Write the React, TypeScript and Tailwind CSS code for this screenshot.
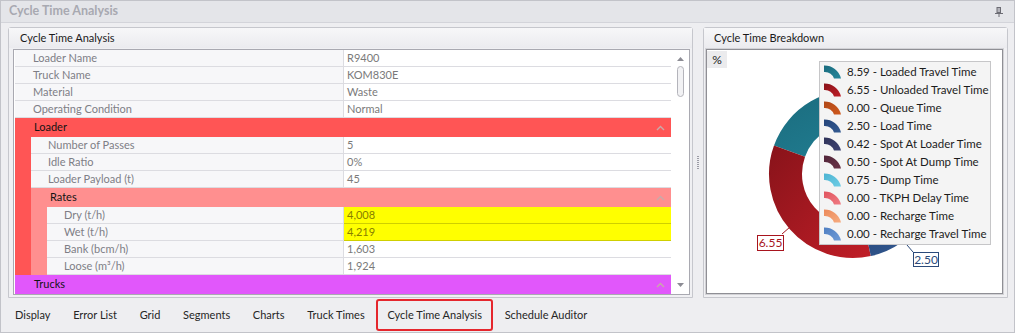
import React from 'react';

type GridRow = {
  label: string;
  value?: string;
  strips: string[];
  cat?: string;
  yellow?: boolean;
};

const RED = 'bg-[#ff5555]';
const SALMON = 'bg-[#ff8f8f]';

const rows: GridRow[] = [
  { label: 'Loader Name', value: 'R9400', strips: [] },
  { label: 'Truck Name', value: 'KOM830E', strips: [] },
  { label: 'Material', value: 'Waste', strips: [] },
  { label: 'Operating Condition', value: 'Normal', strips: [] },
  { label: 'Loader', strips: [], cat: RED },
  { label: 'Number of Passes', value: '5', strips: [RED] },
  { label: 'Idle Ratio', value: '0%', strips: [RED] },
  { label: 'Loader Payload (t)', value: '45', strips: [RED] },
  { label: 'Rates', strips: [RED], cat: SALMON },
  { label: 'Dry (t/h)', value: '4,008', strips: [RED, SALMON], yellow: true },
  { label: 'Wet (t/h)', value: '4,219', strips: [RED, SALMON], yellow: true },
  { label: 'Bank (bcm/h)', value: '1,603', strips: [RED, SALMON] },
  { label: 'Loose (m³/h)', value: '1,924', strips: [RED, SALMON] },
  { label: 'Trucks', strips: [], cat: 'bg-[#e157fb]' },
];

const segments = [
  { value: 8.59, label: 'Loaded Travel Time', from: '#1a6b7d', to: '#25879c' },
  { value: 6.55, label: 'Unloaded Travel Time', from: '#88131a', to: '#c01e27' },
  { value: 0, label: 'Queue Time', from: '#b04818', to: '#d05a1e' },
  { value: 2.5, label: 'Load Time', from: '#25457a', to: '#345b92' },
  { value: 0.42, label: 'Spot At Loader Time', from: '#2f3359', to: '#3e4372' },
  { value: 0.5, label: 'Spot At Dump Time', from: '#52263a', to: '#693246' },
  { value: 0.75, label: 'Dump Time', from: '#4db4d2', to: '#6fcde5' },
  { value: 0, label: 'TKPH Delay Time', from: '#e0545e', to: '#f07c84' },
  { value: 0, label: 'Recharge Time', from: '#ec8a5a', to: '#f6ac80' },
  { value: 0, label: 'Recharge Travel Time', from: '#4f7fc2', to: '#6f9bd6' },
];

const tabs = ['Display', 'Error List', 'Grid', 'Segments', 'Charts', 'Truck Times', 'Cycle Time Analysis', 'Schedule Auditor'];

function arcPath(cx: number, cy: number, R: number, r: number, a0: number, a1: number) {
  const pt = (rad: number, a: number) => [cx + rad * Math.cos((a * Math.PI) / 180), cy - rad * Math.sin((a * Math.PI) / 180)];
  const [x0, y0] = pt(R, a0);
  const [x1, y1] = pt(R, a1);
  const [x2, y2] = pt(r, a1);
  const [x3, y3] = pt(r, a0);
  const large = a1 - a0 > 180 ? 1 : 0;
  return `M${x0} ${y0} A${R} ${R} 0 ${large} 0 ${x1} ${y1} L${x2} ${y2} A${r} ${r} 0 ${large} 1 ${x3} ${y3} Z`;
}

function Chevron() {
  return (
    <svg width="9" height="6" viewBox="0 0 9 6">
      <path d="M1 5 L4.5 1.5 L8 5" fill="none" stroke="#c9a9a9" strokeWidth="1.4" />
    </svg>
  );
}

function GridLine({ row }: { row: GridRow }) {
  if (row.cat) {
    return (
      <div className="flex h-[19px]">
        {row.strips.map((s, i) => (
          <div key={i} className={`w-4 shrink-0 ${s}`} />
        ))}
        <div className={`flex flex-1 items-center justify-between pl-[19px] pr-[6px] text-[#141414] ${row.cat}`}>
          <span>{row.label}</span>
          <Chevron />
        </div>
      </div>
    );
  }
  return (
    <div className="flex h-[17px]">
      <div className="flex w-[329px] shrink-0">
        {row.strips.map((s, i) => (
          <div key={i} className={`w-4 shrink-0 ${s}`} />
        ))}
        <div
          className={`flex-1 border-r border-b border-[#dcdce1] bg-[#f7f7f9] leading-[16px] text-[#7e7e86] ${
            row.strips.length === 0 ? 'pl-[18px]' : 'pl-[17px]'
          }`}
        >
          {row.label}
        </div>
      </div>
      <div
        className={`flex-1 border-b pl-[3px] leading-[16px] ${
          row.yellow ? 'border-[#cfcf00] bg-[#ffff00] text-[#878000]' : 'border-[#dcdce1] bg-white text-[#7a7a7a]'
        }`}
      >
        {row.value}
      </div>
    </div>
  );
}

function LegendMarker({ from, to, id }: { from: string; to: string; id: string }) {
  return (
    <svg width="20" height="14" viewBox="0 0 20 14" className="shrink-0">
      <defs>
        <linearGradient id={id} x1="0" y1="0" x2="1" y2="1">
          <stop offset="0" stopColor={from} />
          <stop offset="1" stopColor={to} />
        </linearGradient>
      </defs>
      <path d="M2 0.5 A17 17 0 0 1 19 13.5 L12 13.5 A10 10 0 0 0 2 7 Z" fill={`url(#${id})`} />
    </svg>
  );
}

function Donut() {
  const total = segments.reduce((s, x) => s + x.value, 0);
  let angle = 0;
  const cx = 146;
  const cy = 124;
  return (
    <svg width="295" height="243" className="block">
      <defs>
        {segments.map((s, i) => (
          <linearGradient key={i} id={`seg${i}`} x1="0" y1="0" x2="1" y2="1">
            <stop offset="0" stopColor={s.from} />
            <stop offset="1" stopColor={s.to} />
          </linearGradient>
        ))}
      </defs>
      {segments.map((s, i) => {
        const a0 = angle;
        const a1 = angle + (s.value / total) * 360;
        angle = a1;
        if (s.value === 0) return null;
        return <path key={i} d={arcPath(cx, cy, 84, 51, a0, a1)} fill={`url(#seg${i})`} />;
      })}
      <line x1="75" y1="184" x2="83" y2="177" stroke="#a8141e" strokeWidth="1" />
      <line x1="200" y1="195" x2="206" y2="202" stroke="#2b4a7a" strokeWidth="1" />
    </svg>
  );
}

function PinIcon() {
  return (
    <svg width="8" height="10" viewBox="0 0 8 10">
      <rect x="2" y="0.5" width="3.5" height="5" fill="#b4b4bb" stroke="#6c6c74" strokeWidth="1" />
      <path d="M0 6.5 H8" stroke="#6c6c74" strokeWidth="1" />
      <path d="M4 7 V10" stroke="#6c6c74" strokeWidth="1" />
    </svg>
  );
}

export default function App() {
  return (
    <div className="flex h-[333px] w-[1015px] flex-col overflow-hidden border border-[#c2c3c9] bg-[#eeeef1] font-['Lato',sans-serif] text-[11px]">
      {/* Title bar */}
      <div className="flex h-[22px] shrink-0 items-center justify-between border-b border-[#d3d4da] bg-[#e4e5e9] pr-[11px] pl-[8px]">
        <span className="text-[12.5px] font-bold text-[#a8a9b1]">Cycle Time Analysis</span>
        <PinIcon />
      </div>

      {/* Panels */}
      <div className="flex h-[275px] shrink-0 pt-[4px] pl-[7px]">
        <div className="flex h-[271px] w-[685px] flex-col rounded-t-[3px] border border-[#c6c7cd] bg-[#f0f0f3]">
          <div className="flex h-[20px] items-center bg-linear-to-b from-[#f7f7f9] to-[#ebebef] pl-[11px] text-[#1a1a1a]">
            Cycle Time Analysis
          </div>
          <div className="pt-[1px] pl-[4px]">
            <div className="flex h-[246px] w-[677px] border border-[#a9a9b1] bg-white pl-[1px]">
              <div className="w-[656px]">
                {rows.map((r) => (
                  <GridLine key={r.label} row={r} />
                ))}
              </div>
              <div className="flex w-[18px] flex-col items-center bg-white">
                <svg width="7" height="4" viewBox="0 0 7 4" className="mt-[7px]">
                  <path d="M0 4 L3.5 0 L7 4 Z" fill="#8c8c94" />
                </svg>
                <div className="mt-[5px] h-[31px] w-[7px] rounded-full border border-[#b4b4bb] bg-[#f2f2f4]" />
                <div className="flex-1" />
                <svg width="7" height="4" viewBox="0 0 7 4" className="mb-[7px]">
                  <path d="M0 0 L3.5 4 L7 0 Z" fill="#8c8c94" />
                </svg>
              </div>
            </div>
          </div>
        </div>

        {/* Splitter */}
        <div className="flex w-[10px] items-center justify-center">
          <div className="flex flex-col gap-[1px]">
            {[0, 1, 2, 3, 4, 5, 6].map((i) => (
              <div key={i} className="h-[1px] w-[2px] bg-[#9c9ca6]" />
            ))}
          </div>
        </div>

        <div className="flex h-[271px] w-[305px] flex-col rounded-t-[3px] border border-[#c6c7cd] bg-[#f0f0f3]">
          <div className="flex h-[20px] items-center bg-linear-to-b from-[#f7f7f9] to-[#ebebef] pl-[10px] text-[#1a1a1a]">
            Cycle Time Breakdown
          </div>
          <div className="pl-[1px]">
            <div className="h-[247px] w-[299px] border border-[#d2d2d6]">
              <div className="relative h-[245px] w-[297px] border border-[#8f8f95] bg-white">
                <Donut />
                <div className="absolute top-[1px] left-0 flex h-[17px] w-[20px] items-center justify-center bg-[#ebebed] text-[12px] text-[#222]">
                  %
                </div>
                <div className="absolute top-[11px] left-[112px] w-[172px] border border-[#c6c6c8] bg-[#f4f4f4] py-[1px] pl-[2px] text-[11.5px] whitespace-nowrap text-[#1c1c1c]">
                  {segments.map((s, i) => (
                    <div key={s.label} className="flex h-[18px] items-center gap-[5px]">
                      <LegendMarker from={s.from} to={s.to} id={`lg${i}`} />
                      <span>
                        {s.value.toFixed(2)} - {s.label}
                      </span>
                    </div>
                  ))}
                </div>
                <div className="absolute top-[185px] left-[50px] flex h-[16px] w-[27px] items-center justify-center border border-[#a8141e] bg-white text-[12px] text-[#a8141e]">
                  6.55
                </div>
                <div className="absolute top-[202px] left-[206px] flex h-[15px] w-[26px] items-center justify-center border border-[#2b4a7a] bg-white text-[12px] text-[#2b4a7a]">
                  2.50
                </div>
              </div>
            </div>
          </div>
        </div>
      </div>

      {/* Bottom tabs */}
      <div className="flex h-[34px] shrink-0 items-center gap-[0.7px] pl-[3px] text-[#262626]">
        {tabs.map((t) =>
          t === 'Cycle Time Analysis' ? (
            <div key={t} className="flex h-[32px] items-center rounded-[3px] border-2 border-[#e5262d] px-[9px]">
              {t}
            </div>
          ) : (
            <div key={t} className="flex h-[32px] items-center px-[11px]">
              {t}
            </div>
          )
        )}
      </div>
    </div>
  );
}
